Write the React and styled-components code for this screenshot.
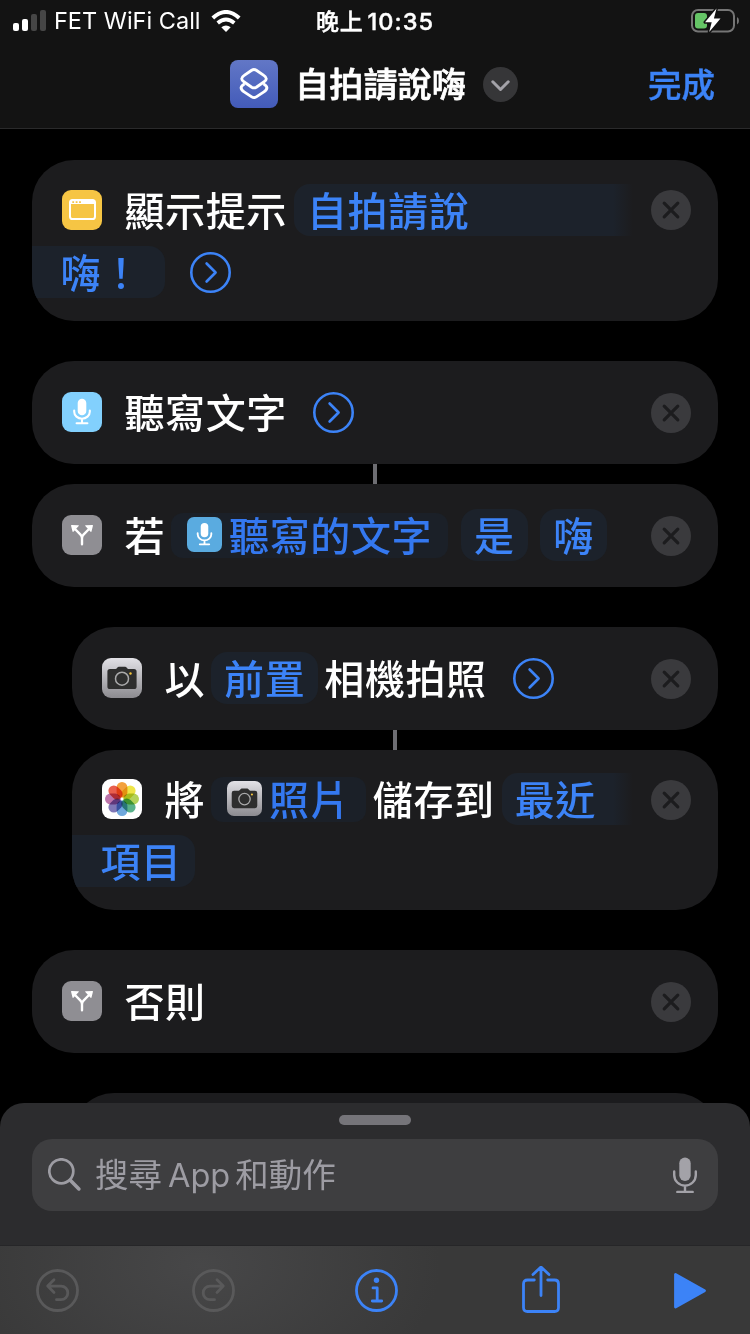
import React from 'react';
import styled, { createGlobalStyle } from 'styled-components';

const steps = [
  {
    id: 'alert',
    top: 24,
    bottom: 23,
    gap: 40,
    lines: [
      [
        { type: 'app', icon: 'alert' },
        { type: 'text', value: '顯示提示' },
        { type: 'chip', value: '自拍請說', open: 'right', left: 7 },
        { type: 'close', raised: true },
      ],
      [
        { type: 'chip', value: '嗨！', open: 'left', end: 23 },
        { type: 'more', left: 25 },
      ],
    ],
  },
  {
    id: 'dictate',
    top: 25,
    bottom: 26,
    gap: 20,
    linked: true,
    lines: [
      [{ type: 'app', icon: 'mic' }, { type: 'text', value: '聽寫文字' }, { type: 'more', left: 26 }, { type: 'close' }],
    ],
  },
  {
    id: 'if',
    top: 25,
    bottom: 26,
    gap: 40,
    lines: [
      [
        { type: 'app', icon: 'branch' },
        { type: 'text', value: '若' },
        { type: 'variable', icon: 'mic', value: '聽寫的文字', left: 6 },
        { type: 'chip', value: '是', left: 13 },
        { type: 'chip', value: '嗨', left: 12.5 },
        { type: 'close' },
      ],
    ],
  },
  {
    id: 'photo',
    top: 25,
    bottom: 26,
    gap: 20,
    linked: true,
    nested: true,
    lines: [
      [
        { type: 'app', icon: 'camera' },
        { type: 'text', value: '以' },
        { type: 'chip', value: '前置', left: 6 },
        { type: 'text', value: '相機拍照', left: 6 },
        { type: 'more', left: 26 },
        { type: 'close' },
      ],
    ],
  },
  {
    id: 'save',
    top: 23,
    bottom: 23,
    gap: 40,
    nested: true,
    lines: [
      [
        { type: 'app', icon: 'photos' },
        { type: 'text', value: '將' },
        { type: 'variable', icon: 'camera', value: '照片', left: 6 },
        { type: 'text', value: '儲存到', left: 6.5 },
        { type: 'chip', value: '最近', open: 'right', left: 7 },
        { type: 'close' },
      ],
      [{ type: 'chip', value: '項目', open: 'left' }],
    ],
  },
  {
    id: 'else',
    top: 25,
    bottom: 26,
    gap: 40,
    lines: [[{ type: 'app', icon: 'branch' }, { type: 'text', value: '否則' }, { type: 'close' }]],
  },
  { id: 'next', top: 25, bottom: 26, gap: 0, nested: true, lines: [[]] },
];

const petals = ['#f3a13c', '#efe548', '#b3d25a', '#58b18a', '#6fa8dd', '#8078b8', '#bd74ab', '#e95f4e'];

function MicGlyph() {
  return (
    <>
      <rect x="15.7" y="6.8" width="8.6" height="16.4" rx="4.3" fill="#fff" />
      <path d="M12.2 18.5v1.2a7.8 7 0 0 0 15.600 0v-1.200M20 26.800v4.200M14.600 31.200h10.800" fill="none" stroke="#fff" strokeWidth="2.1" strokeLinecap="round" />
    </>
  );
}

function AppGlyph({ name, uid }) {
  if (name === 'alert') {
    return (
      <>
        <rect width="40" height="40" fill="#f6c544" />
        <rect x="8" y="10" width="25" height="19" rx="2.6" fill="none" stroke="#fff" strokeWidth="2" />
        <path d="M8 14V12q0-2.500 2.500-2.500h20q2.500 0 2.500 2.500v2z" fill="#fff" />
        <path d="M10.300 11.200h1.800v1.800h-1.800zM13.700 11.200h1.800v1.800h-1.800zM17.100 11.200h1.800v1.800h-1.800z" fill="#f6c544" />
      </>
    );
  }
  if (name === 'mic') {
    return (
      <>
        <rect width="40" height="40" fill={uid === 'small' ? '#5aabe0' : '#82d0fd'} />
        <MicGlyph />
      </>
    );
  }
  if (name === 'branch') {
    return (
      <>
        <rect width="40" height="40" fill="#8f8e93" />
        <path d="M20 29.200v-6q0-2-1.500-3.500L13 14M20 23.200q0-2 1.500-3.500L27 14" fill="none" stroke="#fff" strokeWidth="2.400" strokeLinecap="round" />
        <path d="M9 10.500q0-.500.600-.500l6.900.300q.700.200.200.800l-5.300 5.600q-.600.500-.900-.200zM31 10.500q0-.500-.600-.500l-6.900.300q-.700.200-.200.800l5.300 5.600q.600.500.900-.200z" fill="#fff" />
      </>
    );
  }
  if (name === 'camera') {
    return (
      <>
        <defs>
          <linearGradient id={`silver-${uid}`} x1="0" y1="0" x2="0" y2="1">
            <stop offset="0" stopColor="#e2e1e6" />
            <stop offset="1" stopColor="#8c8b90" />
          </linearGradient>
        </defs>
        <rect width="40" height="40" fill={`url(#silver-${uid})`} />
        <path d="M8 11h5.500q1 0 1.500-.900t1.700-1.400h6.600q1.200.500 1.700 1.400t1.500.900H32q2.600 0 2.600 2.600v14.800q0 2.600-2.600 2.600H8q-2.600 0-2.600-2.600V13.600Q5.400 11 8 11z" fill="#2e2e2e" />
        <circle cx="20" cy="20.700" r="6.500" fill="none" stroke="#a9a9aa" strokeWidth="1.500" />
        <circle cx="28.500" cy="15.500" r="1.200" fill="#f5c53c" />
      </>
    );
  }
  return (
    <>
      <rect width="40" height="40" fill="#fff" />
      <PetalGroup>
        {petals.map((color, index) => (
          <Petal key={color} x="14.600" y="3" width="10.800" height="15.600" rx="5.400" fill={color} transform={`rotate(${index * 45} 20 20)`} />
        ))}
      </PetalGroup>
    </>
  );
}

function AppIcon({ name, small }) {
  return (
    <AppTile viewBox="0 0 40 40" $small={small}>
      <AppGlyph name={name} uid={small ? 'small' : 'large'} />
    </AppTile>
  );
}

function Part({ part }) {
  switch (part.type) {
    case 'app':
      return <AppIcon name={part.icon} />;
    case 'text':
      return <Label $left={part.left ?? 22.5}>{part.value}</Label>;
    case 'chip':
      return (
        <Chip $left={part.left} $open={part.open} $end={part.end}>
          <Word>{part.value}</Word>
        </Chip>
      );
    case 'variable':
      return (
        <Variable $left={part.left}>
          <AppIcon name={part.icon} small />
          <Word>{part.value}</Word>
        </Variable>
      );
    case 'more':
      return (
        <More viewBox="0 0 41 41" $left={part.left}>
          <circle cx="20.500" cy="20.500" r="19.200" />
          <path d="M16.600 11.500l9 9-9 9" />
        </More>
      );
    default:
      return (
        <Close viewBox="0 0 40 40" $raised={part.raised}>
          <circle cx="20" cy="20" r="20" />
          <path d="M13.200 13.200l13.600 13.600M26.800 13.200L13.200 26.800" />
        </Close>
      );
  }
}

function StatusBar() {
  return (
    <Status>
      <Carrier>
        <svg width="34" height="22" viewBox="0 0 34 22">
          <rect x="0" y="13" width="6" height="8" rx="2" fill="#fff" />
          <rect x="9" y="9" width="6" height="12" rx="2" fill="#fff" />
          <rect x="18" y="4" width="6" height="17" rx="2" fill="#464646" />
          <rect x="27" y="0" width="6" height="21" rx="2" fill="#464646" />
        </svg>
        <span>FET WiFi Call</span>
        <svg width="30" height="22" viewBox="0 0 30 22">
          <path d="M1.800 8Q15-4 28.200 8" fill="none" stroke="#fff" strokeWidth="4" />
          <path d="M6.700 13Q15 6 23.300 13" fill="none" stroke="#fff" strokeWidth="3.800" />
          <path d="M10.300 17.300Q15 13.500 19.700 17.300L15 22z" fill="#fff" />
        </svg>
      </Carrier>
      <Clock>
        晚上<b>10:35</b>
      </Clock>
      <Battery width="50" height="26" viewBox="0 0 50 26">
        <rect x="2" y="3" width="42" height="21.500" rx="6" fill="none" stroke="#757575" strokeWidth="2" />
        <path d="M47 10q2 1 2 3.700T47 17.500z" fill="#757575" />
        <rect x="5" y="6" width="12" height="15.500" rx="3" fill="#65c466" />
        <path d="M26.500 1.500L15 15.300h6.700L19.200 25 30.500 11.500h-6.600L26.500 1.500z" fill="#fff" stroke="#131313" strokeWidth="3" paintOrder="stroke" strokeLinejoin="round" />
      </Battery>
    </Status>
  );
}

export default function App() {
  return (
    <>
      <GlobalStyle />
      <Screen>
        <Header>
          <StatusBar />
          <NavBar>
            <TitleGroup>
              <svg width="48" height="48" viewBox="0 0 48 48">
                <defs>
                  <linearGradient id="shortcut" x1="0" y1="0" x2="0" y2="1">
                    <stop offset="0" stopColor="#6277c6" />
                    <stop offset="1" stopColor="#435bb9" />
                  </linearGradient>
                </defs>
                <rect width="48" height="48" rx="8" fill="url(#shortcut)" />
                <g fill="none" stroke="#fff" strokeWidth="2.900" strokeLinejoin="round">
                  <path d="M14.500 23.800l-2 1.500q-2.400 2-.600 4.600 .800 1 2.200 2l7.600 5q2.300 1.500 4.600 0l7.600-5q1.400-1 2.200-2 1.800-2.600-.600-4.600l-2-1.500" />
                  <path d="M21.700 10.200q2.300-1.400 4.600 0l7.500 5.200q5 3.300 0 6.600l-7.500 5.200q-2.300 1.400-4.600 0l-7.500-5.200q-5-3.300 0-6.600z" />
                </g>
              </svg>
              <Title>自拍請說嗨</Title>
              <svg width="35" height="35" viewBox="0 0 35 35">
                <circle cx="17.500" cy="17.500" r="17.500" fill="#363638" />
                <path d="M9.800 14.800l7.700 7.700 7.700-7.700" fill="none" stroke="#a3a2a8" strokeWidth="3" strokeLinecap="round" strokeLinejoin="round" />
              </svg>
            </TitleGroup>
            <Done>完成</Done>
          </NavBar>
        </Header>

        <StepList>
          {steps.map((step) => (
            <StepSlot key={step.id} $nested={step.nested}>
              <Card $top={step.top} $bottom={step.bottom}>
                {step.lines.map((line, index) => (
                  <Line key={index} $flush={line[0]?.open === 'left'}>
                    {line.map((part, partIndex) => (
                      <Part key={partIndex} part={part} />
                    ))}
                  </Line>
                ))}
              </Card>
              <Gap $height={step.gap}>{step.linked && <Connector />}</Gap>
            </StepSlot>
          ))}
        </StepList>

        <Tray>
          <Grabber />
          <SearchField>
            <svg width="34" height="34" viewBox="0 0 34 34" fill="none" stroke="#9d9ca3" strokeLinecap="round">
              <circle cx="13.300" cy="13.300" r="12" strokeWidth="2.700" />
              <path d="M22.300 22.300l8.600 8.600" strokeWidth="3.600" />
            </svg>
            <Placeholder>
              搜尋<span>App</span>和動作
            </Placeholder>
            <svg width="24" height="37" viewBox="0 0 24 37">
              <rect x="6.300" y="0.500" width="11.400" height="23.500" rx="5.700" fill="#a3a2a8" />
              <path d="M1.200 14.500v3.500a10.800 10.600 0 0 0 21.600 0v-3.500M12 29v5.800M4.300 34.900h15.400" fill="none" stroke="#a3a2a8" strokeWidth="2.400" strokeLinecap="round" />
            </svg>
          </SearchField>
        </Tray>

        <Toolbar>
          <ToolIcon width="43" height="43" viewBox="0 0 43 43" $muted>
            <circle cx="21.500" cy="21.500" r="20" />
            <path d="M18 10.800l-6.300 6.300 6.300 6.300M12 17.100h13a6.700 6.700 0 0 1 0 13.600h-4.500" />
          </ToolIcon>
          <ToolIcon width="43" height="43" viewBox="0 0 43 43" $muted>
            <circle cx="21.500" cy="21.500" r="20" />
            <path d="M25 10.800l6.300 6.300-6.300 6.300M31 17.100H18a6.700 6.700 0 0 0 0 13.600h4.500" />
          </ToolIcon>
          <ToolIcon width="43" height="43" viewBox="0 0 43 43">
            <circle cx="21.500" cy="21.500" r="20" />
            <path d="M18 18.900h4.200v13M17.300 32h9.400" />
            <circle cx="21.500" cy="11.300" r="2.700" fill="#3c83f7" stroke="none" />
          </ToolIcon>
          <ToolIcon width="38" height="49" viewBox="0 0 38 49">
            <path d="M12.300 14H5.500Q1.500 14 1.500 18V41.500q0 4 4 4h27q4 0 4-4V18q0-4-4-4h-6.800" />
            <path d="M19 29.500V1.500M11 8.500l8-7.500 8 7.500" />
          </ToolIcon>
          <ToolIcon width="33" height="37" viewBox="0 0 33 37">
            <path d="M2.500 2.500v32.500L31.500 18.700z" fill="#3c83f7" />
          </ToolIcon>
        </Toolbar>
      </Screen>
    </>
  );
}

const GlobalStyle = createGlobalStyle`
  body {
    margin: 0;
    background: #000;
  }

  svg {
    display: block;
    flex: none;
  }
`;

const Screen = styled.div`
  width: 750px;
  height: 1334px;
  display: flex;
  flex-direction: column;
  overflow: hidden;
  background: #000;
  color: #fff;
  font-family: Inter, 'Noto Sans CJK TC', sans-serif;
`;

const Header = styled.header`
  height: 128px;
  flex: none;
  background: #131313;
  border-bottom: 1px solid #2a2a2b;
`;

const Status = styled.div`
  height: 40px;
  box-sizing: border-box;
  padding: 0 10px 0 13px;
  display: grid;
  grid-template-columns: 303px 1fr auto;
  align-items: center;
`;

const Carrier = styled.div`
  display: flex;
  align-items: center;
  font-size: 23.5px;
  line-height: 40px;
  white-space: nowrap;

  span {
    width: 157px;
    margin-left: 7px;
  }
`;

const Clock = styled.div`
  font-family: 'Noto Sans CJK TC', sans-serif;
  font-size: 23px;
  font-weight: 500;
  line-height: 40px;
  letter-spacing: 0.8px;
  -webkit-text-stroke: 0.4px #fff;

  b {
    font-family: Inter, sans-serif;
    font-size: 23.5px;
    font-weight: 500;
    letter-spacing: 1px;
    margin-left: 4px;
  }
`;

const Battery = styled.svg`
  margin-top: -3px;
`;

const NavBar = styled.div`
  height: 88px;
  box-sizing: border-box;
  padding: 0 34px 0 230px;
  display: flex;
  align-items: center;
  justify-content: space-between;
`;

const TitleGroup = styled.div`
  display: flex;
  align-items: center;
`;

const Title = styled.h1`
  width: 171px;
  margin: -2px 17px 0;
  font-family: 'Noto Sans CJK TC', sans-serif;
  font-size: 34px;
  font-weight: 500;
  line-height: 48px;
  letter-spacing: 0.2px;
  white-space: nowrap;
  -webkit-text-stroke: 0.7px #fff;
`;

const Done = styled.span`
  margin-top: -2px;
  margin-right: 1px;
  font-family: 'Noto Sans CJK TC', sans-serif;
  font-size: 33.5px;
  font-weight: 500;
  line-height: 48px;
  color: #3c83f7;
  -webkit-text-stroke: 0.4px #3c83f7;
`;

const StepList = styled.main`
  flex: 1;
  min-height: 0;
  overflow: hidden;
  padding: 31px 32px 0;
`;

const StepSlot = styled.div`
  padding-left: ${(props) => (props.$nested ? 40 : 0)}px;
`;

const Card = styled.section`
  display: flex;
  flex-direction: column;
  gap: 10px;
  padding: ${(props) => props.$top}px 0 ${(props) => props.$bottom}px;
  border-radius: 42px;
  background: #1c1c1e;
  overflow: hidden;
`;

const Gap = styled.div`
  height: ${(props) => props.$height}px;
  display: flex;
  justify-content: center;
`;

const Connector = styled.span`
  width: 4px;
  background: #6d6d72;
`;

const Line = styled.div`
  height: 52px;
  display: flex;
  align-items: center;
  padding: 0 27px 0 ${(props) => (props.$flush ? 0 : 30)}px;
`;

const Label = styled.span`
  margin-left: ${(props) => props.$left}px;
  margin-top: -3px;
  font-family: 'Noto Sans CJK TC', sans-serif;
  font-size: 40px;
  font-weight: 500;
  line-height: 52px;
  letter-spacing: 0.6px;
  white-space: nowrap;
`;

const Word = styled.span`
  margin-top: -3px;
`;

const Chip = styled.span`
  height: 52px;
  box-sizing: border-box;
  display: flex;
  align-items: center;
  margin-left: ${(props) => props.$left || 0}px;
  padding: 0 13px;
  border-radius: 16px;
  background: #1c222b;
  color: #3c83f7;
  font-family: 'Noto Sans CJK TC', sans-serif;
  font-size: 40px;
  font-weight: 500;
  line-height: 52px;
  letter-spacing: 0.6px;
  white-space: nowrap;

  ${(props) =>
    props.$open === 'right' &&
    `
    flex: 1;
    margin-right: 18px;
    border-radius: 16px 0 0 16px;
    background: linear-gradient(to left, #1c1c1e, #1c222b 20px);
  `}

  ${(props) =>
    props.$open === 'left' &&
    `
    padding: 0 ${props.$end || 13}px 0 28.5px;
    border-radius: 0 16px 16px 0;
  `}
`;

const Variable = styled(Chip)`
  height: 45px;
  gap: 7px;
  padding: 0 16px;
  border-radius: 12px;
  background: #1b2028;
  color: #3478f0;
`;

const AppTile = styled.svg`
  width: ${(props) => (props.$small ? 35 : 40)}px;
  height: ${(props) => (props.$small ? 35 : 40)}px;
  margin-top: ${(props) => (props.$small ? -2 : 0)}px;
  border-radius: ${(props) => (props.$small ? 7 : 9)}px;
`;

const PetalGroup = styled.g`
  isolation: isolate;
`;

const Petal = styled.rect`
  mix-blend-mode: multiply;
`;

const More = styled.svg`
  width: 41px;
  height: 41px;
  margin-left: ${(props) => props.$left}px;
  margin-top: 1px;
  fill: none;
  stroke: #3c83f7;
  stroke-width: 2.6px;
  stroke-linecap: round;
  stroke-linejoin: round;
`;

const Close = styled.svg`
  width: 40px;
  height: 40px;
  margin-left: auto;
  margin-top: ${(props) => (props.$raised ? 0 : 2)}px;
  fill: #3a3a3d;

  path {
    stroke: #1c1c1e;
    stroke-width: 3.2px;
    stroke-linecap: round;
  }
`;

const Tray = styled.section`
  height: 142px;
  flex: none;
  box-sizing: border-box;
  padding: 12px 32px 0;
  border-radius: 24px 24px 0 0;
  background: #2c2c2e;
`;

const Grabber = styled.div`
  width: 72px;
  height: 10px;
  margin: 0 auto 14px;
  border-radius: 5px;
  background: #757479;
`;

const SearchField = styled.div`
  height: 72px;
  box-sizing: border-box;
  display: flex;
  align-items: center;
  padding: 0 21px 0 16px;
  border-radius: 20px;
  background: #3e3e40;
`;

const Placeholder = styled.span`
  flex: 1;
  margin: -1px 0 0 13px;
  font-family: 'Noto Sans CJK TC', sans-serif;
  font-size: 33.5px;
  font-weight: 400;
  line-height: 48px;
  color: #9d9ca3;

  span {
    margin: 0 5px 0 6px;
    font-family: Inter, sans-serif;
    font-size: 32.5px;
  }
`;

const Toolbar = styled.footer`
  height: 89px;
  flex: none;
  box-sizing: border-box;
  display: grid;
  grid-template-columns: 156px 163px 167px 151px auto;
  align-items: center;
  padding-left: 36px;
  border-top: 1px solid #262628;
  background: radial-gradient(ellipse 240px 150px at 200px 20px, #474748, transparent), #393939;
`;

const ToolIcon = styled.svg`
  fill: none;
  stroke: ${(props) => (props.$muted ? '#59595a' : '#3c83f7')};
  stroke-width: 2.8px;
  stroke-linecap: round;
  stroke-linejoin: round;
`;
